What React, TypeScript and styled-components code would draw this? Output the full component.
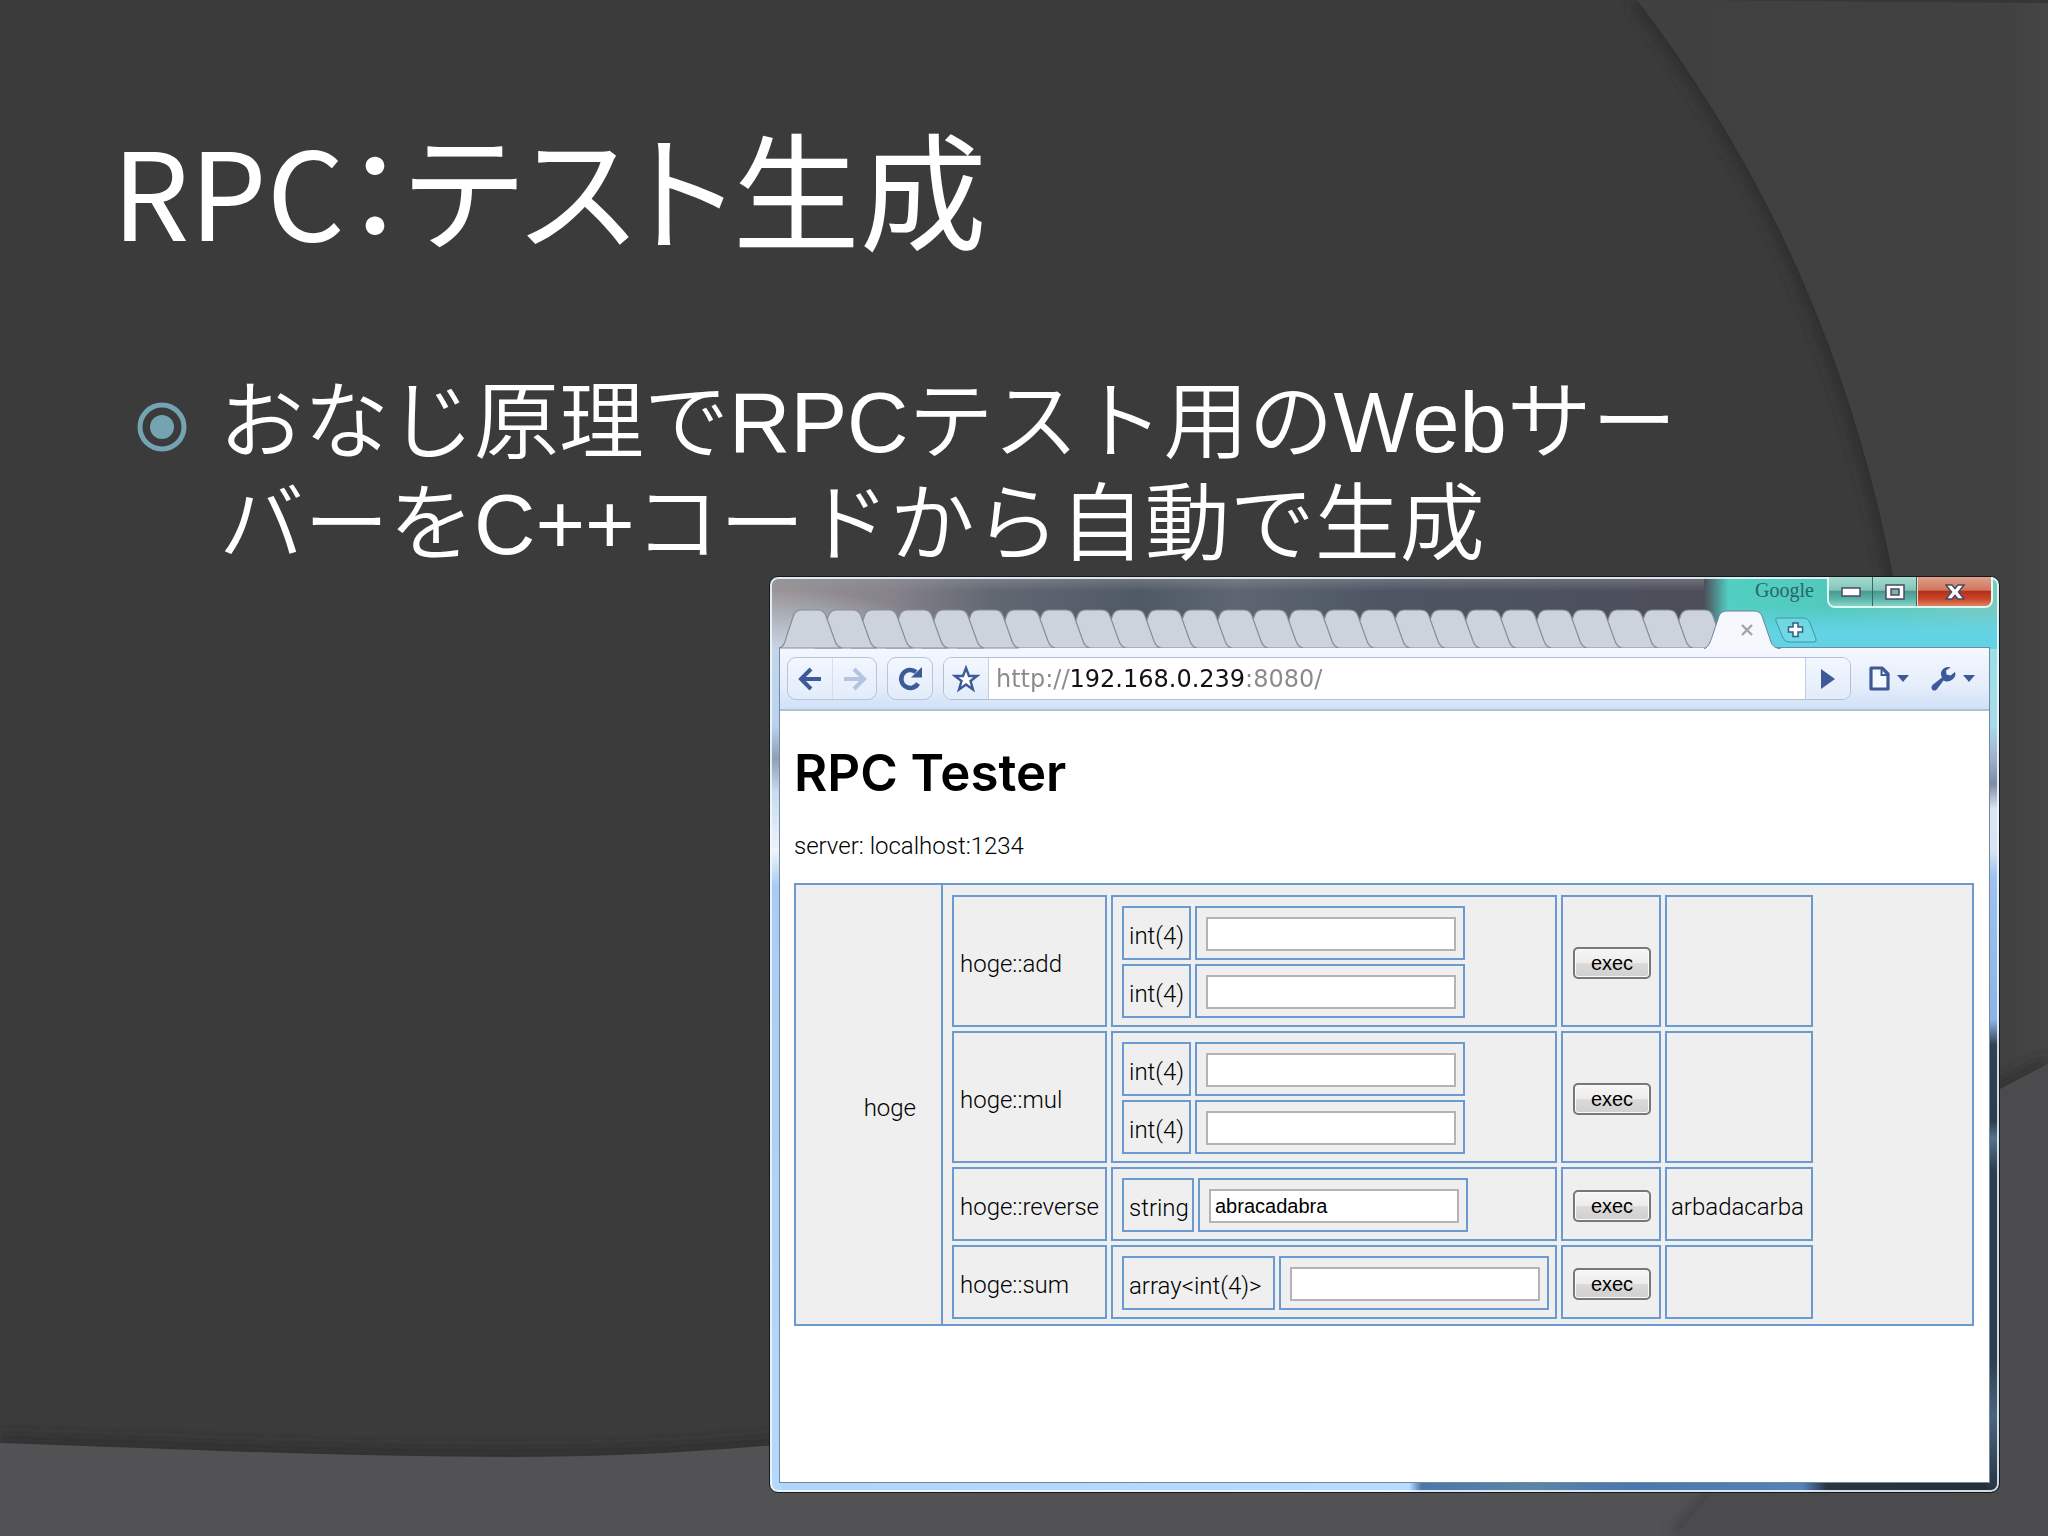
import React from "react";
import styled, { createGlobalStyle } from "styled-components";

const SANS = '"Liberation Sans", Arial, "Noto Sans CJK JP", sans-serif';
const PAGE_FONT = 'Roboto, "Noto Sans CJK JP", sans-serif';
const LINE = "#6a9acf";
const NAVY = "#3c5a98";

const GlobalStyle = createGlobalStyle`
  *, *::before, *::after { box-sizing: border-box; }
  body { margin: 0; background: #3b3b3c; }
  button, input { margin: 0; padding: 0; border: 0; background: none; font: inherit; color: inherit; }
  button { display: inline-flex; align-items: center; justify-content: center; cursor: pointer; }
  svg { display: block; }
`;

/* ---------- slide ---------- */

const Slide = styled.main`
  position: relative;
  min-height: 100vh;
  padding: 96px 0 43px;
  overflow: hidden;
  background: #3b3b3c;
  color: #fff;
  isolation: isolate;
`;

const Backdrop = styled.svg`
  position: absolute;
  inset: 0;
  width: 100%;
  height: 100%;
  z-index: -1;
`;

const SlideTitle = styled.h1`
  margin: 0;
  padding-left: 112px;
  font-family: "Noto Sans CJK JP", sans-serif;
  font-size: 122px;
  font-weight: 400;
  line-height: 180px;
  font-feature-settings: "palt";
`;

const TitleKana = styled.span`
  font-size: 127px;
`;

const Bullets = styled.ul`
  list-style: none;
  margin: 94px 0 0;
  padding: 0 0 0 137px;
`;

const Bullet = styled.li`
  display: flex;
  gap: 32px;
  max-width: 1580px;
  font-family: ${SANS};
  font-size: 85px;
  font-weight: 350;
  line-height: 102px;
`;

const BulletMark = styled.svg`
  flex: none;
  width: 50px;
  height: 50px;
  margin-top: 30px;
`;

/* ---------- browser window ---------- */

const Window = styled.section`
  display: flex;
  flex-direction: column;
  min-height: 917px;
  margin: 0 48px 0 769px;
  padding-bottom: 10px;
  border: 1px solid #16181a;
  border-radius: 9px;
  color: #000;
  box-shadow: inset 0 0 0 2px rgba(240, 248, 255, 0.85);
  background:
    linear-gradient(#9adfe6 0, #a8dbe9 9%, #9fb0cc 13%, #7d8ba6 16%, #dbe6f3 19%, #d6e3f3 24%, #9fc2ee 27%, #8db4e6 44%, #2f4152 47%, #2c3d4d 56%, #55728c 58%, #2c3d4d 62%, #2c3d4d 84%, #4a6580 91%, #263340 100%) right 72px / 12px calc(100% - 72px) no-repeat,
    linear-gradient(#c3d6ea 0, #b9d3ee 9%, #8f9fb4 13%, #c9dbee 17%, #eef4fa 24%, #a9cdf2 28%, #b4d9fb 100%) left 72px / 12px calc(100% - 72px) no-repeat,
    linear-gradient(90deg, #b0d5fa 0, #b8dcff 52%, #4c78a8 53%, #5b84a8 62%, #4a78ae 70%, #5583b8 84%, #2b3440 86%, #262e38 100%) left bottom / 100% 12px no-repeat,
    linear-gradient(180deg, rgba(98, 212, 230, 0) 40%, rgba(98, 212, 230, 0.95) 75%) right top / 278px 72px no-repeat,
    radial-gradient(ellipse 180px 60px at 0 72px, rgba(205, 222, 238, 0.9), rgba(205, 222, 238, 0)) left top / 76% 72px no-repeat,
    linear-gradient(180deg, rgba(150, 152, 160, 0.5) 0, rgba(150, 152, 160, 0) 20%) left top / 76% 72px no-repeat,
    linear-gradient(90deg, #9a9496 0, #85828a 10%, #626872 18%, #4f5966 30%, #5d6672 38%, #4d5563 50%, #4c4e59 76%, #52cfc2 78%, #52c9bb 86%, #7cc9bd 100%) left top / 100% 72px no-repeat,
    #b4d9fb;
`;

const Caption = styled.header`
  display: flex;
  justify-content: flex-end;
  gap: 13px;
  height: 33px;
  padding-right: 6px;
`;

const Brand = styled.span`
  font-family: "Liberation Serif", serif;
  font-size: 20px;
  line-height: 26px;
  color: #27676b;
`;

const Controls = styled.div`
  display: flex;
  height: 31px;
  border: 2px solid rgba(235, 255, 250, 0.9);
  border-top: 0;
  border-radius: 0 0 8px 8px;
  overflow: hidden;
`;

const ControlButton = styled.button<{ $close?: boolean }>`
  width: ${(p) => (p.$close ? 74 : 44)}px;
  border-left: ${(p) => (p.$close ? "1px solid #f0d5c8" : "0")};
  border-right: ${(p) => (p.$close ? "0" : "1px solid #2e6a66")};
  background: ${(p) =>
    p.$close
      ? "linear-gradient(#e0a08c 0, #d0765c 45%, #b5301a 50%, #c8452a 75%, #e0845c 100%)"
      : "linear-gradient(#a5dbd0 0, #84c5b9 45%, #4a9a90 50%, #5cb2a6 75%, #86d6c8 100%)"};
`;

const TabStrip = styled.div`
  display: flex;
  height: 38px;
  padding: 0 10px;
`;

const OldTabs = styled.div`
  display: flex;
  flex: 0 1 922px;
  min-width: 0;
`;

const OldTab = styled.button<{ $layer: number }>`
  position: relative;
  z-index: ${(p) => p.$layer};
  flex: 1 1 0;
  min-width: 0;
  justify-content: flex-start;
  svg { flex: none; overflow: visible; }
`;

const ActiveTab = styled.div`
  position: relative;
  z-index: 40;
  display: grid;
  flex: none;
  width: 78px;
  margin-left: 2px;
  > * { grid-area: 1 / 1; }
`;

const CloseTab = styled.button`
  place-self: center;
  margin-left: 8px;
`;

const NewTab = styled.button`
  align-self: flex-start;
  margin: 7px 0 0 -7px;
`;

const Client = styled.div`
  display: flex;
  flex: 1;
  flex-direction: column;
  margin: 0 10px;
  background: #fff;
  box-shadow: 0 0 0 1px #7388a5;
`;

const Toolbar = styled.nav`
  position: relative;
  z-index: 20;
  display: flex;
  align-items: center;
  height: 63px;
  padding: 0 14px 0 7px;
  border-bottom: 2px solid #b3bfd3;
  background: linear-gradient(#f4f7fe 0, #e6eefb 60%, #d0e1f7 100%);
`;

const ButtonGroup = styled.div`
  display: flex;
  height: 43px;
  margin-right: 10px;
  border: 1px solid #b9c3dc;
  border-radius: 9px;
  background: linear-gradient(#f3f7fe, #e2ecfa);
`;

const ToolButton = styled.button<{ $line?: boolean }>`
  width: 44px;
  border-left: ${(p) => (p.$line ? "1px solid #d5def0" : "0")};
`;

const Omnibox = styled.form`
  display: flex;
  flex: 1;
  height: 43px;
  margin-right: 18px;
  border: 1px solid #b3bdd4;
  border-radius: 9px;
  overflow: hidden;
  background: #fff;
`;

const OmniButton = styled.button<{ $end?: boolean }>`
  flex: none;
  width: 45px;
  border-left: ${(p) => (p.$end ? "1px solid #c3cce0" : "0")};
  border-right: ${(p) => (p.$end ? "0" : "1px solid #c3cce0")};
  background: linear-gradient(#f3f7fe, #e2ecfa);
`;

const Address = styled.input`
  flex: 1;
  min-width: 0;
  margin-left: 7px;
  outline: 0;
  font-family: "DejaVu Sans", Verdana, sans-serif;
  font-size: 24px;
  color: transparent;
  background: linear-gradient(90deg, #8a8a8a 73px, #111 73px, #111 249px, #8a8a8a 249px);
  background-clip: text;
  -webkit-background-clip: text;
`;

const MenuButton = styled.button`
  gap: 7px;
  height: 43px;
  & + & { margin-left: 22px; }
`;

/* ---------- page inside the browser ---------- */

const Page = styled.article`
  padding: 32px 15px 20px 14px;
  font-family: ${PAGE_FONT};
  font-size: 24px;
  font-weight: 300;
  line-height: 30px;
`;

const PageTitle = styled.h2`
  margin: 0;
  font-family: Inter, sans-serif;
  font-size: 51px;
  font-weight: 600;
  line-height: 60px;
`;

const Server = styled.p`
  margin: 28px 0 22px;
`;

const ServiceTable = styled.table`
  width: 100%;
  border-collapse: collapse;
  background: #efeff0;
`;

const ServiceName = styled.th`
  width: 147px;
  padding: 6px 25px 0 0;
  border: 2px solid ${LINE};
  font-weight: 300;
  text-align: right;
`;

const ServiceBody = styled.td`
  padding: 6px 0 1px 5px;
  border: 2px solid ${LINE};
`;

const GridTable = styled.table`
  border-collapse: separate;
  border-spacing: 4px;
`;

const Cell = styled.td<{ $width: number }>`
  width: ${(p) => p.$width}px;
  height: 74px;
  padding: 6px 0 0 6px;
  border: 2px solid ${LINE};
`;

const ArgsCell = styled(Cell)`
  padding: 5px 0 3px 5px;
`;

const ExecCell = styled(Cell)`
  padding: 3px 0 0 10px;
`;

const ResultCell = styled(Cell)`
  padding: 6px 0 0 4px;
`;

const TypeCell = styled.td<{ $width: number }>`
  width: ${(p) => p.$width}px;
  height: 54px;
  padding: 6px 0 0 5px;
  border: 2px solid ${LINE};
  white-space: nowrap;
`;

const InputCell = styled.td`
  padding: 9px 7px 7px 9px;
  border: 2px solid ${LINE};
`;

const ArgInput = styled.input`
  display: block;
  width: 250px;
  height: 34px;
  padding: 0 4px;
  border: 2px solid #b4b4b6;
  background: #fff;
  font-family: ${SANS};
  font-size: 20px;
  font-weight: 400;
`;

const ExecButton = styled.button`
  width: 78px;
  height: 32px;
  border: 2px solid #77787a;
  border-radius: 5px;
  background: linear-gradient(#f6f6f6 0, #ececec 50%, #dadada 52%, #d0d0d0 100%);
  box-shadow: inset 0 0 0 1px #fafafa;
  font-family: ${SANS};
  font-size: 20px;
  font-weight: 400;
  line-height: 24px;
`;

type Arg = { type: string; value?: string };
type Method = { name: string; typeWidth: number; args: Arg[]; result?: string };

const methods: Method[] = [
  { name: "hoge::add", typeWidth: 69, args: [{ type: "int(4)" }, { type: "int(4)" }] },
  { name: "hoge::mul", typeWidth: 69, args: [{ type: "int(4)" }, { type: "int(4)" }] },
  { name: "hoge::reverse", typeWidth: 72, args: [{ type: "string", value: "abracadabra" }], result: "arbadacarba" },
  { name: "hoge::sum", typeWidth: 153, args: [{ type: "array<int(4)>" }] },
];

const ARC = "M1637 0 C1760 160 1850 350 1893 576 C1955 900 1900 1230 1710 1495 L1676 1536";
const WAVE = "M0 1443 C200 1450 350 1457 512 1457 C1000 1457 1550 1330 2048 1064";

function SlideBackdrop() {
  return (
    <Backdrop viewBox="0 0 2048 1536" preserveAspectRatio="none" aria-hidden="true">
      <defs>
        <linearGradient id="right" x1="0" x2="1">
          <stop offset="0" stopColor="#404041" />
          <stop offset="0.9" stopColor="#414142" />
          <stop offset="1" stopColor="#464647" />
        </linearGradient>
        <clipPath id="wave"><path d={`${WAVE} V1536 H0 Z`} /></clipPath>
        <clipPath id="aboveWave"><path d={`${WAVE} V0 H0 Z`} /></clipPath>
        <clipPath id="insideArc"><path d={`${ARC} H0 V0 Z`} /></clipPath>
        <filter id="soft" x="-20%" y="-20%" width="140%" height="140%"><feGaussianBlur stdDeviation="6" /></filter>
      </defs>
      <path d={`${ARC} H2048 V0 Z`} fill="url(#right)" />
      <g clipPath="url(#insideArc)">
        <path d={ARC} fill="none" stroke="#2d2d2d" strokeWidth="18" strokeOpacity="0.85" filter="url(#soft)" />
      </g>
      <path d="M1700 0 H2048 V3 Z" fill="#363636" />
      <g clipPath="url(#aboveWave)">
        <path d={WAVE} fill="none" stroke="#2b2b2b" strokeWidth="20" strokeOpacity="0.55" filter="url(#soft)" />
      </g>
      <g clipPath="url(#wave)">
        <rect width="2048" height="1536" fill="#525254" />
        <path d={`${ARC} H2048 V0 Z`} fill="#4b4b4d" />
        <g clipPath="url(#insideArc)">
          <path d={ARC} fill="none" stroke="#444446" strokeWidth="16" filter="url(#soft)" />
        </g>
      </g>
    </Backdrop>
  );
}

const Caret = () => (
  <svg width="12" height="8" viewBox="0 0 12 8"><path d="M0 0H12L6 7Z" fill={NAVY} /></svg>
);

const TAB_COUNT = 26;

function Tabs() {
  return (
    <TabStrip>
      <OldTabs>
        {Array.from({ length: TAB_COUNT }, (_, i) => (
          <OldTab key={i} $layer={TAB_COUNT - i} type="button" aria-label={`Tab ${i + 1}`}>
            <svg width="62" height="38" viewBox="0 0 62 38">
              <path d="M0 38C4 36 5 32 7 25L13 7Q15 0 21 0H38Q44 0 46 6L55 31Q57 37 62 38Z" fill="#ccd3dd" stroke="#878e99" strokeWidth="1.2" />
            </svg>
          </OldTab>
        ))}
      </OldTabs>
      <ActiveTab>
        <svg width="78" height="39" viewBox="0 0 78 39">
          <path d="M0 39C5 37 7 30 9 24L15 6Q17 1 23 1H50Q56 1 58 6L67 32Q69 38 77 39Z" fill="#f6f8fe" />
          <path d="M0 39C5 37 7 30 9 24L15 6Q17 1 23 1H50Q56 1 58 6L67 32Q69 38 77 39" fill="none" stroke="#6f8296" strokeWidth="1" />
        </svg>
        <CloseTab type="button" aria-label="Close tab">
          <svg width="12" height="12" viewBox="0 0 12 12"><path d="M1 1L11 11M11 1L1 11" stroke="#a3a3a6" strokeWidth="2.4" /></svg>
        </CloseTab>
      </ActiveTab>
      <NewTab type="button" aria-label="New tab">
        <svg width="42" height="26" viewBox="0 0 42 26">
          <path d="M2 1H28Q33 1 35 6L41 22Q42 25 39 25H14Q10 25 8 21L1 4Q0 1 2 1Z" fill="#7fdde6" fillOpacity="0.55" stroke="#3f98a8" />
          <path d="M18 6H23V10H27.500V15H23V19.500H18V15H13.500V10H18Z" fill="#fff" stroke="#2b5f86" strokeWidth="1.500" />
        </svg>
      </NewTab>
    </TabStrip>
  );
}

function BrowserToolbar() {
  return (
    <Toolbar>
      <ButtonGroup>
        <ToolButton type="button" aria-label="Back">
          <svg width="24" height="24" viewBox="0 0 24 24" fill="none" stroke={NAVY} strokeWidth="4">
            <path d="M13 2L3 12L13 22M4 12H23" />
          </svg>
        </ToolButton>
        <ToolButton type="button" $line aria-label="Forward">
          <svg width="24" height="24" viewBox="0 0 24 24" fill="none" stroke="#b4c4e2" strokeWidth="4">
            <path d="M11 2L21 12L11 22M20 12H1" />
          </svg>
        </ToolButton>
      </ButtonGroup>
      <ButtonGroup>
        <ToolButton type="button" aria-label="Reload">
          <svg width="26" height="26" viewBox="0 0 26 26">
            <path d="M21 17.500A9 9 0 1 1 19 6" fill="none" stroke={NAVY} strokeWidth="4.500" />
            <path d="M25 1V11.500H14Z" fill={NAVY} />
          </svg>
        </ToolButton>
      </ButtonGroup>
      <Omnibox onSubmit={(e) => e.preventDefault()}>
        <OmniButton type="button" aria-label="Bookmark this page">
          <svg width="28" height="28" viewBox="0 0 28 28">
            <path d="M14 3L17 11H25L18.500 16L21 24.500L14 19.500L7 24.500L9.500 16L3 11H11Z" fill="#fff" stroke={NAVY} strokeWidth="2.400" />
          </svg>
        </OmniButton>
        <Address aria-label="Address" defaultValue="http://192.168.0.239:8080/" spellCheck={false} />
        <OmniButton type="submit" $end aria-label="Go">
          <svg width="16" height="20" viewBox="0 0 16 20"><path d="M1 0L15 10L1 20Z" fill={NAVY} /></svg>
        </OmniButton>
      </Omnibox>
      <MenuButton type="button" aria-label="Page menu">
        <svg width="21" height="25" viewBox="0 0 21 25">
          <path d="M2 2H13L19 8V23H2Z" fill="#f4f8ff" stroke={NAVY} strokeWidth="3.200" strokeLinejoin="round" />
          <path d="M12.500 2V9H19" fill="none" stroke={NAVY} strokeWidth="2" />
        </svg>
        <Caret />
      </MenuButton>
      <MenuButton type="button" aria-label="Tools menu">
        <svg width="25" height="25" viewBox="0 0 25 25">
          <path d="M18 1C13.500 0.500 9.500 4 10 9L11 11.500L1.500 19C-0.500 21 0.500 24 3 24.500C4.500 24.800 5.500 24 6.500 22.500L12.500 14.500C17 17 23.500 14 24.500 8.500L24 6L19.500 9.500L15.500 8.500L15 4.500L19.500 1.500Z" fill={NAVY} />
        </svg>
        <Caret />
      </MenuButton>
    </Toolbar>
  );
}

function MethodRow({ method }: { method: Method }) {
  return (
    <tr>
      <Cell $width={155}>{method.name}</Cell>
      <ArgsCell $width={446}>
        <GridTable>
          <tbody>
            {method.args.map((arg, i) => {
              const id = `${method.name}-${i}`;
              return (
                <tr key={id}>
                  <TypeCell $width={method.typeWidth}><label htmlFor={id}>{arg.type}</label></TypeCell>
                  <InputCell><ArgInput id={id} type="text" defaultValue={arg.value} /></InputCell>
                </tr>
              );
            })}
          </tbody>
        </GridTable>
      </ArgsCell>
      <ExecCell $width={100}><ExecButton type="button">exec</ExecButton></ExecCell>
      <ResultCell $width={148}>{method.result}</ResultCell>
    </tr>
  );
}

export default function App() {
  return (
    <Slide>
      <GlobalStyle />
      <SlideBackdrop />
      <SlideTitle>RPC：<TitleKana>テスト生成</TitleKana></SlideTitle>
      <Bullets>
        <Bullet>
          <BulletMark viewBox="0 0 50 50" aria-hidden="true">
            <circle cx="25" cy="25" r="22" fill="none" stroke="#74a3b2" strokeWidth="5" />
            <circle cx="25" cy="25" r="12" fill="#74a3b2" />
          </BulletMark>
          <span>おなじ原理でRPCテスト用のWebサーバーをC++コードから自動で生成</span>
        </Bullet>
      </Bullets>

      <Window aria-label="Browser">
        <Caption>
          <Brand>Google</Brand>
          <Controls>
            <ControlButton type="button" aria-label="Minimize">
              <svg width="20" height="10" viewBox="0 0 20 10"><rect x="1" y="1" width="18" height="8" fill="#fff" stroke="#4a4a66" strokeWidth="1.500" /></svg>
            </ControlButton>
            <ControlButton type="button" aria-label="Maximize">
              <svg width="20" height="16" viewBox="0 0 20 16">
                <rect x="1" y="1" width="18" height="14" fill="#fff" stroke="#4a4a66" strokeWidth="1.500" />
                <rect x="6" y="5" width="8" height="6" fill="#7cb5ac" stroke="#4a4a66" strokeWidth="1.500" />
              </svg>
            </ControlButton>
            <ControlButton type="button" $close aria-label="Close">
              <svg width="20" height="16" viewBox="0 0 20 16">
                <path d="M1 1H7L10 4.500L13 1H19L13.500 8L19 15H13L10 11.500L7 15H1L6.500 8Z" fill="#fff" stroke="#4a4a66" strokeWidth="1.500" />
              </svg>
            </ControlButton>
          </Controls>
        </Caption>
        <Tabs />
        <Client>
          <BrowserToolbar />
          <Page>
            <PageTitle>RPC Tester</PageTitle>
            <Server>server: localhost:1234</Server>
            <ServiceTable>
              <tbody>
                <tr>
                  <ServiceName scope="row">hoge</ServiceName>
                  <ServiceBody>
                    <GridTable>
                      <tbody>
                        {methods.map((m) => <MethodRow key={m.name} method={m} />)}
                      </tbody>
                    </GridTable>
                  </ServiceBody>
                </tr>
              </tbody>
            </ServiceTable>
          </Page>
        </Client>
      </Window>
    </Slide>
  );
}
